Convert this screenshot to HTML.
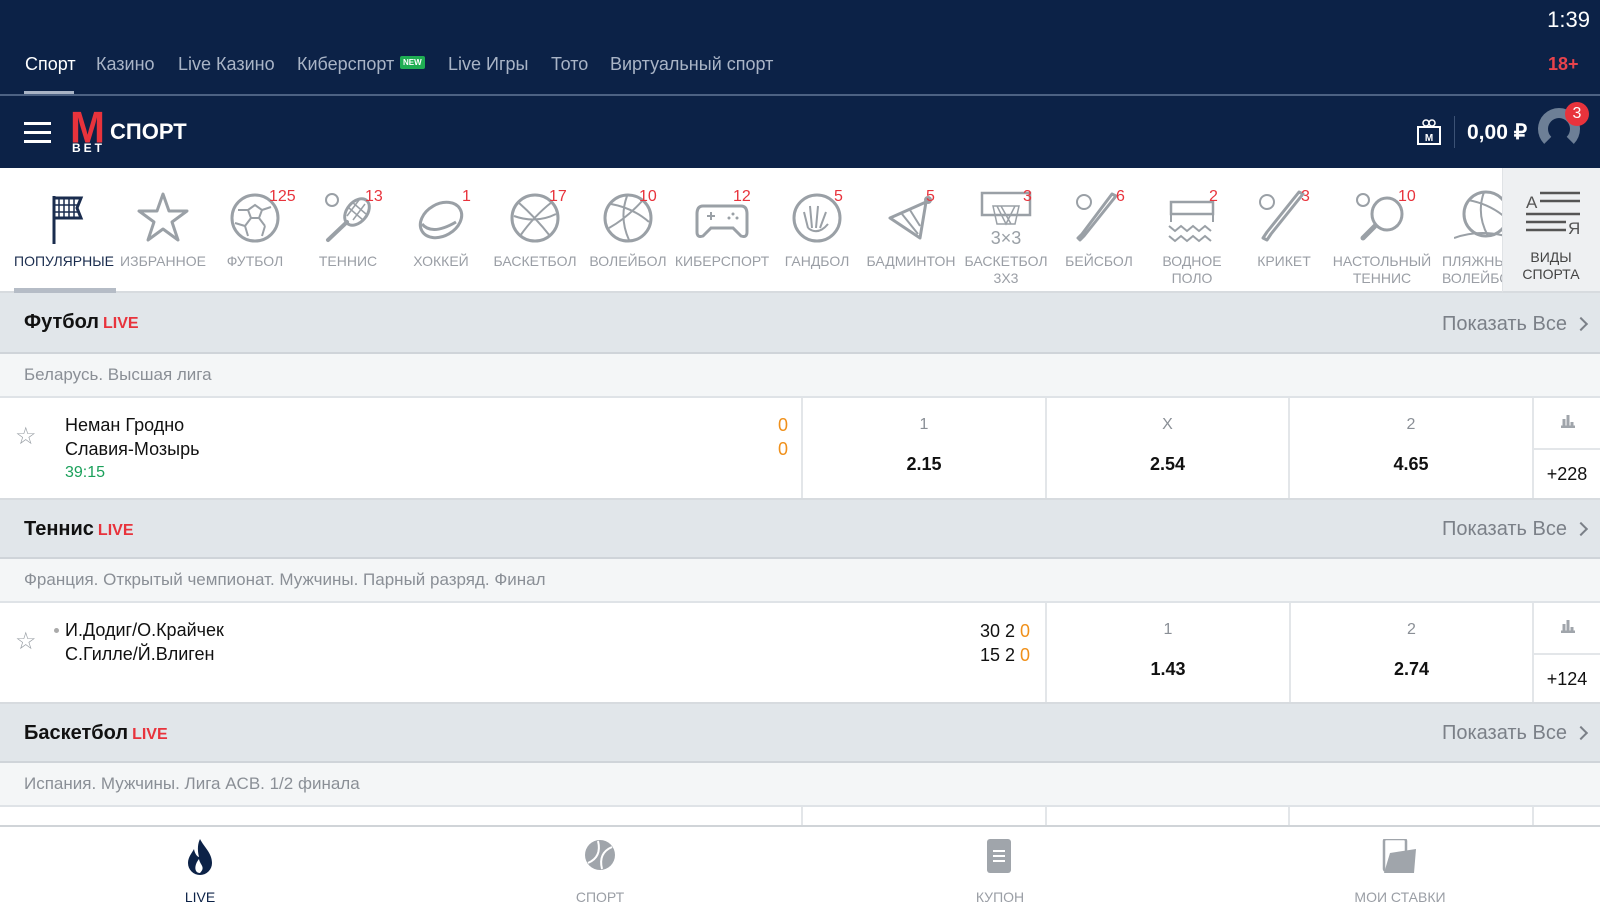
<!DOCTYPE html>
<html><head><meta charset="utf-8">
<style>
*{margin:0;padding:0;box-sizing:border-box}
body{width:1600px;height:900px;overflow:hidden;background:#fff;font-family:"Liberation Sans",Arial,sans-serif;position:relative}
.abs{position:absolute}
.top{left:0;top:0;width:1600px;height:168px;background:#0c2247}
.tab{top:54px;font-size:18px;color:#a9b4c6}
.sep{left:0;top:94px;width:1600px;height:2px;background:#4d6283}
.sport{position:absolute;top:170px;width:100px;text-align:center;font-size:14px;color:#9a9ea5;line-height:17px}
.sport svg{display:block;margin:18px auto 7px;width:58px;height:58px}
.cnt{position:absolute;top:18px;font-size:16px;color:#e8333c;margin-left:9px}
.hdr{left:0;width:1600px;background:#e1e6ea;border-bottom:2px solid #cfd4d9}
.hdr b{position:absolute;left:24px;font-size:20px;color:#111}
.hdr b i{font-style:normal;color:#e8333c;font-size:16px;font-weight:bold;margin-left:4px}
.hdr span{position:absolute;right:33px;font-size:20px;color:#7b8088}
.hdr .ch{position:absolute;right:14px;width:10px;height:10px;border-right:2px solid #7b8088;border-top:2px solid #7b8088;transform:rotate(45deg)}
.lg{left:0;width:1600px;background:#f4f6f7;border-bottom:2px solid #dfe3e7;font-size:17px;color:#8a8f96;padding-left:24px}
.row{left:0;width:1600px;background:#fff;border-bottom:2px solid #d7dbdf}
.cell{position:absolute;top:0;bottom:0;border-left:2px solid #e3e6e9;text-align:center}
.cell .l{position:absolute;top:18px;width:100%;font-size:16px;color:#8a8f96}
.cell .v{position:absolute;top:56px;width:100%;font-size:18px;font-weight:bold;color:#111}
.tm{position:absolute;left:65px;font-size:18px;color:#111}
.star{position:absolute;left:15px;font-size:24px;color:#9aa0a6}
.nav{left:0;top:825px;width:1600px;height:75px;background:#fff;border-top:2px solid #d0d4d8}
.nl{position:absolute;top:62px;width:200px;text-align:center;font-size:14px;color:#9a9ea5}
</style></head><body>
<div class="abs top"></div>
<div class="abs" style="right:10px;top:7px;color:#fff;font-size:22px">1:39</div>
<div class="abs tab" style="left:25px;color:#fff">Спорт</div>
<div class="abs tab" style="left:96px">Казино</div>
<div class="abs tab" style="left:178px">Live Казино</div>
<div class="abs tab" style="left:297px">Киберспорт</div>
<div class="abs" style="left:400px;top:56px;background:#1fae53;color:#fff;font-size:8px;font-weight:bold;padding:2px 3px;border-radius:2px">NEW</div>
<div class="abs tab" style="left:448px">Live Игры</div>
<div class="abs tab" style="left:551px">Тото</div>
<div class="abs tab" style="left:610px">Виртуальный спорт</div>
<div class="abs" style="left:1548px;top:54px;color:#e8434c;font-size:18px;font-weight:bold">18+</div>
<div class="abs" style="left:24px;top:91px;width:50px;height:4px;background:#a9b4c6"></div>
<div class="abs sep"></div>
<div class="abs" style="left:24px;top:122px;width:27px;height:3px;background:#fff;box-shadow:0 9px 0 #fff,0 18px 0 #fff"></div>
<div class="abs" style="left:70px;top:110px;color:#e8333c;font-size:42px;font-weight:bold;line-height:36px;letter-spacing:-2px;transform:scaleY(1.05)">M</div>
<div class="abs" style="left:72px;top:141px;color:#fff;font-size:12px;font-weight:bold;letter-spacing:3px">BET</div>
<div class="abs" style="left:110px;top:119px;color:#fff;font-size:22px;font-weight:bold">СПОРТ</div>
<svg class="abs" style="left:1416px;top:118px" width="26" height="28" viewBox="0 0 26 28"><rect x="2" y="9" width="22" height="17" fill="none" stroke="#fff" stroke-width="2"/><line x1="1" y1="9" x2="25" y2="9" stroke="#fff" stroke-width="2"/><circle cx="10" cy="5" r="3" fill="none" stroke="#fff" stroke-width="1.5"/><circle cx="16" cy="5" r="3" fill="none" stroke="#fff" stroke-width="1.5"/><text x="13" y="23" font-size="10" font-weight="bold" fill="#fff" text-anchor="middle" font-family="Liberation Sans">M</text></svg>
<div class="abs" style="left:1454px;top:116px;width:1px;height:32px;background:#3c5275"></div>
<div class="abs" style="left:1467px;top:120px;color:#fff;font-size:21px;font-weight:bold">0,00 ₽</div>
<div class="abs" style="left:1538px;top:108px;width:42px;height:42px;border-radius:50%;border:10px solid #6d7f96;border-bottom-color:transparent;transform:rotate(0deg)"></div>
<div class="abs" style="left:1565px;top:102px;width:24px;height:24px;border-radius:50%;background:#e8333c;color:#fff;font-size:16px;text-align:center;line-height:24px">3</div>

<!-- sports row -->
<div class="abs" style="left:0;top:168px;width:1600px;height:125px;background:#fff;border-bottom:2px solid #d7dbdf"></div>
<div class="sport" style="left:14px;color:#1a2c4e"><svg viewBox="0 0 58 58"><line x1="19" y1="8" x2="19" y2="56" stroke="#1a2c4e" stroke-width="3"/><path d="M19 10 H46 L42 20 L46 30 H19" fill="none" stroke="#1a2c4e" stroke-width="3"/><path d="M24 10V30M29 10V30M34 10V30M39 10V30M19 17H44M19 24H44" stroke="#1a2c4e" stroke-width="1.5"/></svg>ПОПУЛЯРНЫЕ</div>
<div class="abs" style="left:14px;top:288px;width:102px;height:5px;background:#b5bcc6"></div>
<div class="sport" style="left:113px"><svg viewBox="0 0 58 58"><path d="M29 6 L35 23 H53 L38 34 L44 52 L29 41 L14 52 L20 34 L5 23 H23 Z" fill="none" stroke="#9aa0a6" stroke-width="3" stroke-linejoin="round"/></svg>ИЗБРАННОЕ</div>
<div class="sport" style="left:205px"><svg viewBox="0 0 58 58"><circle cx="29" cy="30" r="23" fill="none" stroke="#9aa0a6" stroke-width="3"/><path d="M22 22l7-5 7 5-3 8h-8zM22 22l-10 0M36 22l9-3M25 30l-6 8M33 30l6 8M19 38l3 10M39 38l-3 10M19 38l-10-3" fill="none" stroke="#9aa0a6" stroke-width="2"/></svg>ФУТБОЛ<span class="cnt" style="left:55px">125</span></div>
<div class="sport" style="left:298px"><svg viewBox="0 0 58 58"><circle cx="13" cy="12" r="6" fill="none" stroke="#9aa0a6" stroke-width="2"/><ellipse cx="38" cy="24" rx="10" ry="15" transform="rotate(40 38 24)" fill="none" stroke="#9aa0a6" stroke-width="3"/><path d="M28 34 L9 52" stroke="#9aa0a6" stroke-width="4" stroke-linecap="round"/><path d="M30 20l14 12M33 14l14 12M28 28l12 -16M34 32l12-16" stroke="#9aa0a6" stroke-width="1.5"/></svg>ТЕННИС<span class="cnt" style="left:58px">13</span></div>
<div class="sport" style="left:391px"><svg viewBox="0 0 58 58"><ellipse cx="29" cy="32" rx="22" ry="16" transform="rotate(-30 29 32)" fill="none" stroke="#9aa0a6" stroke-width="3"/><path d="M10 36 Q20 48 44 34" fill="none" stroke="#9aa0a6" stroke-width="3"/></svg>ХОККЕЙ<span class="cnt" style="left:62px">1</span></div>
<div class="sport" style="left:485px"><svg viewBox="0 0 58 58"><circle cx="29" cy="30" r="23" fill="none" stroke="#9aa0a6" stroke-width="3"/><path d="M12 14 Q30 30 44 48M46 14 Q28 28 14 48M8 28 Q30 36 50 26" fill="none" stroke="#9aa0a6" stroke-width="2"/></svg>БАСКЕТБОЛ<span class="cnt" style="left:55px">17</span></div>
<div class="sport" style="left:578px"><svg viewBox="0 0 58 58"><circle cx="29" cy="30" r="23" fill="none" stroke="#9aa0a6" stroke-width="3"/><path d="M28 8 Q20 30 30 52M12 16 Q34 20 50 34M10 40 Q28 30 44 12" fill="none" stroke="#9aa0a6" stroke-width="2"/></svg>ВОЛЕЙБОЛ<span class="cnt" style="left:52px">10</span></div>
<div class="sport" style="left:672px"><svg viewBox="0 0 58 58"><path d="M10 18 H48 Q54 18 54 26 V44 Q54 50 48 48 L40 40 H18 L10 48 Q4 50 4 44 V26 Q4 18 10 18Z" fill="none" stroke="#9aa0a6" stroke-width="3"/><path d="M14 28h8M18 24v8" stroke="#9aa0a6" stroke-width="2"/><circle cx="40" cy="26" r="1.5" fill="#9aa0a6"/><circle cx="44" cy="30" r="1.5" fill="#9aa0a6"/><circle cx="36" cy="30" r="1.5" fill="#9aa0a6"/></svg>КИБЕРСПОРТ<span class="cnt" style="left:52px">12</span></div>
<div class="sport" style="left:767px"><svg viewBox="0 0 58 58"><circle cx="29" cy="30" r="23" fill="none" stroke="#9aa0a6" stroke-width="3"/><path d="M20 40 L16 24 M24 40 L22 18 M28 40 L30 18 M32 40 L38 24 M20 40 Q30 48 40 36" fill="none" stroke="#9aa0a6" stroke-width="2"/></svg>ГАНДБОЛ<span class="cnt" style="left:58px">5</span></div>
<div class="sport" style="left:861px"><svg viewBox="0 0 58 58"><path d="M8 30 L44 14 L38 50 Z" fill="none" stroke="#9aa0a6" stroke-width="3" stroke-linejoin="round"/><path d="M20 26 L36 46 M28 22 L38 38" stroke="#9aa0a6" stroke-width="2"/><circle cx="46" cy="12" r="4" fill="#9aa0a6"/></svg>БАДМИНТОН<span class="cnt" style="left:56px">5</span></div>
<div class="sport" style="left:956px"><svg viewBox="0 0 58 58"><rect x="5" y="5" width="48" height="22" fill="none" stroke="#9aa0a6" stroke-width="2.5"/><path d="M16 18 H42 L38 36 H20 Z M20 18 L29 36 L38 18 M24 18 L34 36" fill="none" stroke="#9aa0a6" stroke-width="1.5"/><text x="29" y="56" font-size="18" fill="#9aa0a6" text-anchor="middle" font-family="Liberation Sans">3×3</text></svg>БАСКЕТБОЛ<br>3X3<span class="cnt" style="left:58px">3</span></div>
<div class="sport" style="left:1049px"><svg viewBox="0 0 58 58"><circle cx="14" cy="14" r="7" fill="none" stroke="#9aa0a6" stroke-width="2"/><path d="M46 8 L14 48 L10 52 L8 50 L12 46 L42 6 Z" fill="none" stroke="#9aa0a6" stroke-width="3" stroke-linejoin="round"/></svg>БЕЙСБОЛ<span class="cnt" style="left:58px">6</span></div>
<div class="sport" style="left:1142px"><svg viewBox="0 0 58 58"><rect x="8" y="14" width="42" height="12" fill="none" stroke="#9aa0a6" stroke-width="2.5"/><path d="M8 26 V34 M50 26 V34 M6 38 l6 5 6-5 6 5 6-5 6 5 6-5 6 5 M6 48 l6 5 6-5 6 5 6-5 6 5 6-5 6 5" fill="none" stroke="#9aa0a6" stroke-width="2"/></svg>ВОДНОЕ<br>ПОЛО<span class="cnt" style="left:58px">2</span></div>
<div class="sport" style="left:1234px"><svg viewBox="0 0 58 58"><circle cx="12" cy="14" r="7" fill="none" stroke="#9aa0a6" stroke-width="2"/><path d="M48 6 L16 46 L12 52 L8 50 L12 44 L44 4 Z" fill="none" stroke="#9aa0a6" stroke-width="3" stroke-linejoin="round"/></svg>КРИКЕТ<span class="cnt" style="left:58px">3</span></div>
<div class="sport" style="left:1327px;width:110px"><svg viewBox="0 0 58 58"><circle cx="10" cy="12" r="6" fill="none" stroke="#9aa0a6" stroke-width="2"/><ellipse cx="34" cy="26" rx="15" ry="16" fill="none" stroke="#9aa0a6" stroke-width="3"/><path d="M22 38 L10 50" stroke="#9aa0a6" stroke-width="5" stroke-linecap="round"/></svg>НАСТОЛЬНЫЙ<br>ТЕННИС<span class="cnt" style="left:62px">10</span></div>
<div class="sport" style="left:1440px;text-align:left;width:62px;overflow:hidden;white-space:nowrap;padding-left:2px"><svg viewBox="0 0 58 58" style="margin-left:12px"><circle cx="32" cy="26" r="22" fill="none" stroke="#9aa0a6" stroke-width="3"/><path d="M30 4 Q22 26 34 48M14 12 Q36 16 52 30M0 50 Q28 40 58 50" fill="none" stroke="#9aa0a6" stroke-width="2"/></svg>ПЛЯЖНЫЙ<br>ВОЛЕЙБОЛ</div>
<div class="abs" style="left:1502px;top:168px;width:98px;height:125px;background:#eef0f2;border-left:1px solid #e0e3e6;border-bottom:2px solid #d7dbdf"></div>
<svg class="abs" style="left:1526px;top:190px" width="54" height="46" viewBox="0 0 54 46"><text x="0" y="18" font-size="17" fill="#555" font-family="Liberation Sans">A</text><text x="42" y="44" font-size="17" fill="#555" font-family="Liberation Sans">Я</text><path d="M14 3H54M14 11H54M0 24H54M0 32H40M0 40H40" stroke="#555" stroke-width="2.5"/></svg>
<div class="abs" style="left:1502px;top:249px;width:98px;text-align:center;font-size:14px;color:#444;line-height:17px">ВИДЫ<br>СПОРТА</div>

<!-- Football -->
<div class="abs hdr" style="top:293px;height:61px"><b style="top:18px">Футбол<i>LIVE</i></b><span style="top:20px">Показать Все</span><div class="ch" style="top:26px"></div></div>
<div class="abs lg" style="top:354px;height:44px;line-height:42px">Беларусь. Высшая лига</div>
<div class="abs row" style="top:398px;height:102px">
<div class="star" style="top:24px">☆</div>
<div class="tm" style="top:17px">Неман Гродно</div>
<div class="tm" style="top:41px">Славия-Мозырь</div>
<div class="tm" style="top:66px;color:#1aa05a;font-size:16px">39:15</div>
<div class="abs" style="left:778px;top:17px;color:#f0901a;font-size:18px">0</div>
<div class="abs" style="left:778px;top:41px;color:#f0901a;font-size:18px">0</div>
<div class="cell" style="left:801px;width:244px"><div class="l">1</div><div class="v">2.15</div></div>
<div class="cell" style="left:1045px;width:243px"><div class="l">X</div><div class="v">2.54</div></div>
<div class="cell" style="left:1288px;width:244px"><div class="l">2</div><div class="v">4.65</div></div>
<div class="cell" style="left:1532px;width:68px"><svg style="position:absolute;left:26px;top:16px" width="16" height="14"><path d="M1 13h14M4 13V5M8 13V1M12 13V8" stroke="#a0a5ab" stroke-width="3"/></svg><div style="position:absolute;top:50px;left:0;width:100%;border-top:2px solid #e3e6e9"></div><div style="position:absolute;top:66px;width:100%;font-size:18px;color:#111">+228</div></div>
</div>

<!-- Tennis -->
<div class="abs hdr" style="top:500px;height:59px"><b style="top:18px">Теннис<i>LIVE</i></b><span style="top:18px">Показать Все</span><div class="ch" style="top:24px"></div></div>
<div class="abs lg" style="top:559px;height:44px;line-height:42px">Франция. Открытый чемпионат. Мужчины. Парный разряд. Финал</div>
<div class="abs row" style="top:603px;height:101px">
<div class="star" style="top:24px">☆</div>
<div class="abs" style="left:54px;top:25px;width:5px;height:5px;border-radius:50%;background:#aaa"></div>
<div class="tm" style="top:17px">И.Додиг/О.Крайчек</div>
<div class="tm" style="top:41px">С.Гилле/Й.Влиген</div>
<div class="abs" style="left:980px;top:18px;font-size:18px;color:#111">30 2 <span style="color:#f0901a">0</span></div>
<div class="abs" style="left:980px;top:42px;font-size:18px;color:#111">15 2 <span style="color:#f0901a">0</span></div>
<div class="cell" style="left:1045px;width:244px"><div class="l">1</div><div class="v">1.43</div></div>
<div class="cell" style="left:1289px;width:243px"><div class="l">2</div><div class="v">2.74</div></div>
<div class="cell" style="left:1532px;width:68px"><svg style="position:absolute;left:26px;top:16px" width="16" height="14"><path d="M1 13h14M4 13V5M8 13V1M12 13V8" stroke="#a0a5ab" stroke-width="3"/></svg><div style="position:absolute;top:50px;left:0;width:100%;border-top:2px solid #e3e6e9"></div><div style="position:absolute;top:66px;width:100%;font-size:18px;color:#111">+124</div></div>
</div>

<!-- Basketball -->
<div class="abs hdr" style="top:704px;height:59px"><b style="top:18px">Баскетбол<i>LIVE</i></b><span style="top:18px">Показать Все</span><div class="ch" style="top:24px"></div></div>
<div class="abs lg" style="top:763px;height:44px;line-height:42px">Испания. Мужчины. Лига ACB. 1/2 финала</div>
<div class="abs" style="top:807px;left:801px;width:2px;height:20px;background:#e3e6e9"></div>
<div class="abs" style="top:807px;left:1045px;width:2px;height:20px;background:#e3e6e9"></div>
<div class="abs" style="top:807px;left:1288px;width:2px;height:20px;background:#e3e6e9"></div>
<div class="abs" style="top:807px;left:1532px;width:2px;height:20px;background:#e3e6e9"></div>

<!-- nav -->
<div class="abs nav">
<svg style="position:absolute;left:186px;top:12px" width="28" height="36" viewBox="0 0 28 36"><path d="M14 0 C18 8 26 14 26 24 A12 12 0 0 1 2 24 C2 18 6 14 8 10 C9 16 12 18 13 18 C11 10 12 4 14 0Z" fill="#0c2247"/><path d="M14 34 C8 34 8 26 13 20 C14 26 20 28 14 34Z" fill="#fff"/></svg>
<div class="nl" style="left:100px;color:#0c2247">LIVE</div>
<svg style="position:absolute;left:584px;top:12px" width="32" height="32" viewBox="0 0 32 32"><circle cx="16" cy="16" r="15" fill="#a0a5ab"/><path d="M4 24 Q18 18 14 2 M28 8 Q14 14 18 30" stroke="#fff" stroke-width="2" fill="none"/></svg>
<div class="nl" style="left:500px">СПОРТ</div>
<svg style="position:absolute;left:987px;top:12px" width="24" height="34" viewBox="0 0 24 34"><rect x="0" y="0" width="24" height="34" rx="3" fill="#a0a5ab"/><path d="M6 12h12M6 17h12M6 22h12" stroke="#fff" stroke-width="2"/></svg>
<div class="nl" style="left:900px">КУПОН</div>
<svg style="position:absolute;left:1382px;top:12px" width="36" height="34" viewBox="0 0 36 34"><rect x="2" y="0" width="22" height="32" rx="2" fill="none" stroke="#a0a5ab" stroke-width="2.5"/><path d="M8 14 L34 10 L32 34 L2 34 Z" fill="#a0a5ab"/></svg>
<div class="nl" style="left:1300px">МОИ СТАВКИ</div>
</div>
</body></html>
